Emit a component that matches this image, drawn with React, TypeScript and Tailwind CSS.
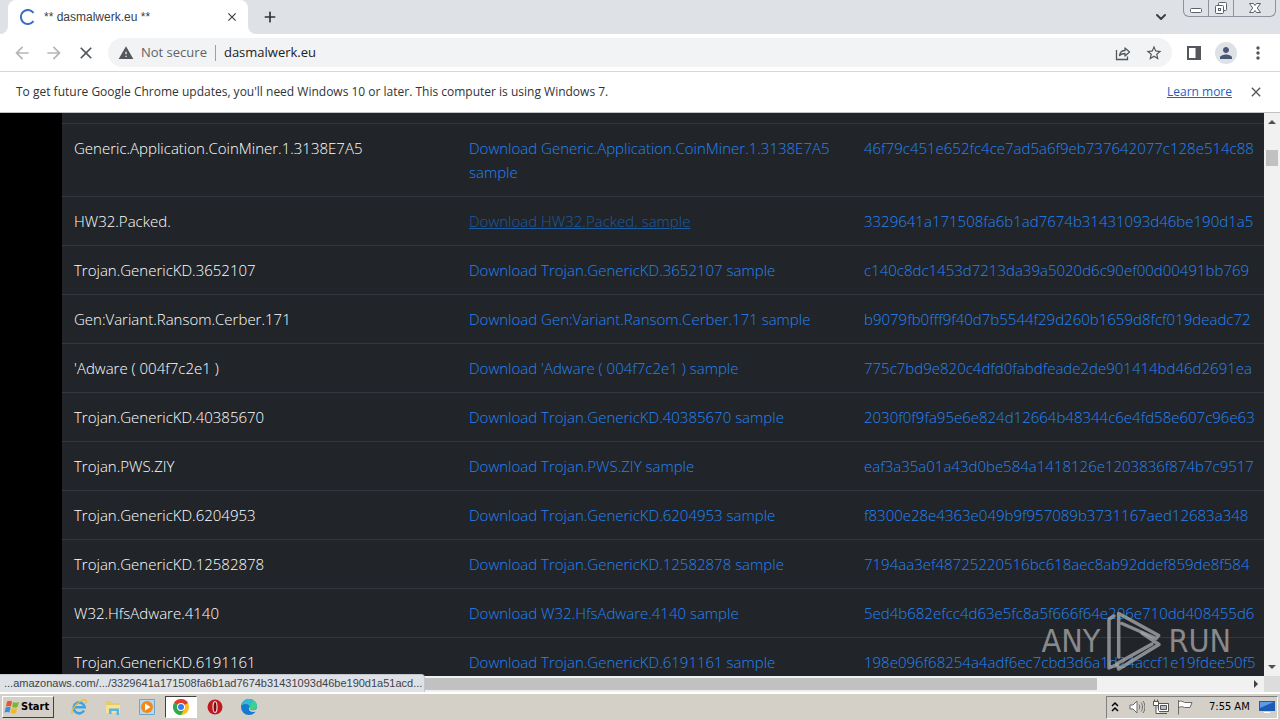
import type { ReactNode } from "react";
import { MdArrowBack, MdArrowForward, MdClose, MdMoreVert, MdPerson, MdStarBorder, MdWarning } from "react-icons/md";
import { ChevronDown, Plus } from "lucide-react";

type Sample = {
  name: string;
  hash: string;
  hovered?: boolean;
};

const samples: Sample[] = [
  { name: "Generic.Application.CoinMiner.1.3138E7A5", hash: "46f79c451e652fc4ce7ad5a6f9eb737642077c128e514c88" },
  { name: "HW32.Packed.", hash: "3329641a171508fa6b1ad7674b31431093d46be190d1a5", hovered: true },
  { name: "Trojan.GenericKD.3652107", hash: "c140c8dc1453d7213da39a5020d6c90ef00d00491bb769" },
  { name: "Gen:Variant.Ransom.Cerber.171", hash: "b9079fb0fff9f40d7b5544f29d260b1659d8fcf019deadc72" },
  { name: "'Adware ( 004f7c2e1 )", hash: "775c7bd9e820c4dfd0fabdfeade2de901414bd46d2691ea" },
  { name: "Trojan.GenericKD.40385670", hash: "2030f0f9fa95e6e824d12664b48344c6e4fd58e607c96e63" },
  { name: "Trojan.PWS.ZIY", hash: "eaf3a35a01a43d0be584a1418126e1203836f874b7c9517" },
  { name: "Trojan.GenericKD.6204953", hash: "f8300e28e4363e049b9f957089b3731167aed12683a348" },
  { name: "Trojan.GenericKD.12582878", hash: "7194aa3ef48725220516bc618aec8ab92ddef859de8f584" },
  { name: "W32.HfsAdware.4140", hash: "5ed4b682efcc4d63e5fc8a5f666f64e206e710dd408455d6" },
  { name: "Trojan.GenericKD.6191161", hash: "198e096f68254a4adf6ec7cbd3d6a1d24accf1e19fdee50f5" }
];

function TabStrip() {
  return (
    <div className="flex h-[34px] shrink-0 items-start bg-[#dee1e6] pl-2">
      <div className="relative flex h-full w-60 items-center rounded-t-lg bg-white pr-2 pl-3">
        <svg className="absolute bottom-0 -left-2 size-2" viewBox="0 0 8 8">
          <path d="M8 0v8H0a8 8 0 0 0 8-8z" fill="#fff" />
        </svg>
        <svg className="absolute -right-2 bottom-0 size-2" viewBox="0 0 8 8">
          <path d="M0 0v8h8a8 8 0 0 1-8-8z" fill="#fff" />
        </svg>
        <svg className="size-4" viewBox="0 0 16 16" fill="none">
          <path d="M13.5 3.8A7 7 0 1 0 13.5 12.2" stroke="#3b6fc4" strokeWidth="2" />
        </svg>
        <span className="ml-2 flex-1 font-['Liberation_Sans',sans-serif] text-[12px] text-[#3c4043]">
          ** dasmalwerk.eu **
        </span>
        <button type="button" aria-label="Close tab" className="flex size-4 items-center justify-center text-[#3c4043]">
          <MdClose className="size-3.5" />
        </button>
      </div>
      <button type="button" aria-label="New tab" className="ml-3 flex h-[34px] w-5 items-center justify-center text-[#30343a]">
        <Plus className="size-4" strokeWidth={2.5} />
      </button>
      <button type="button" aria-label="Search tabs" className="mr-3 ml-auto flex h-[34px] w-5 items-center justify-center text-[#3c4043]">
        <ChevronDown className="size-4" strokeWidth={3} />
      </button>
      <div className="mr-1 flex h-[17px] w-[93px] divide-x divide-[#8d929c] rounded-b-md border border-t-0 border-[#8d929c] text-[#5b606a]">
        <button type="button" aria-label="Minimize" className="flex w-[25px] items-center justify-center">
          <svg className="size-4" viewBox="0 0 16 16" fill="#fff" stroke="currentColor">
            <rect x="2.5" y="8.5" width="11" height="4" rx="1" />
          </svg>
        </button>
        <button type="button" aria-label="Restore" className="flex w-[25px] items-center justify-center">
          <svg className="size-4" viewBox="0 0 16 16" fill="#fff" stroke="currentColor">
            <rect x="5.5" y="2.5" width="8" height="8" rx="1" />
            <rect x="2.5" y="5.5" width="8" height="8" rx="1" />
            <rect x="5.5" y="8.5" width="2" height="2" />
          </svg>
        </button>
        <button type="button" aria-label="Close" className="flex flex-1 items-center justify-center">
          <svg className="size-4" viewBox="0 0 16 16" fill="#fff" stroke="currentColor">
            <path d="M2.5 3.5h4L8 5.5l1.5-2h4L10.3 8l3.2 4.5h-4L8 10.5l-1.5 2h-4L5.7 8z" />
          </svg>
        </button>
      </div>
    </div>
  );
}

function Toolbar() {
  return (
    <div className="flex h-[38px] shrink-0 items-center border-b border-[#d5d7db] bg-white pr-3 pl-3 text-[#54585d]">
      <div className="flex gap-3">
        <button type="button" aria-label="Back" className="text-[#b4b7ba]">
          <MdArrowBack className="size-5" />
        </button>
        <button type="button" aria-label="Forward" className="text-[#b4b7ba]">
          <MdArrowForward className="size-5" />
        </button>
        <button type="button" aria-label="Stop loading">
          <MdClose className="size-5" />
        </button>
      </div>
      <div className="ml-3 flex h-[29px] flex-1 items-center rounded-full bg-[#f1f3f4] pr-[9px] pl-2.5">
        <MdWarning className="size-4" />
        <span className="ml-[7px] text-[13px] text-[#5f6368]">Not secure</span>
        <span className="mx-2 h-4 w-px bg-[#9aa0a6]" />
        <input
          aria-label="Address"
          className="min-w-0 flex-1 bg-transparent text-[13px] text-[#202124] outline-none"
          defaultValue="dasmalwerk.eu"
        />
        <button type="button" aria-label="Share">
          <svg className="size-4" viewBox="0 0 16 16" fill="none" stroke="currentColor" strokeWidth="1.3">
            <path d="M1.5 5v9.5h11v-3" />
            <path d="M4.5 10.5c.5-3.500 2.500-5 5.500-5V3l4.500 4-4.500 4V8.500c-2.500 0-4 .5-5.500 2z" strokeLinejoin="round" />
          </svg>
        </button>
        <button type="button" aria-label="Bookmark" className="ml-3.5">
          <MdStarBorder className="size-[18px]" />
        </button>
      </div>
      <div className="ml-3 flex items-center gap-[11px]">
        <button type="button" aria-label="Side panel" className="flex size-5 items-center justify-center">
          <svg className="size-3.5" viewBox="0 0 14 14">
            <path d="M1 1h12v12H1z" fill="none" stroke="currentColor" strokeWidth="2" />
            <path d="M8.5 1H13v12H8.5z" fill="currentColor" />
          </svg>
        </button>
        <button type="button" aria-label="Profile" className="flex size-[22px] items-center justify-center rounded-full bg-[#dee1e6] text-[#4a5876]">
          <MdPerson className="size-[18px]" />
        </button>
        <button type="button" aria-label="Menu" className="flex size-5 items-center justify-center">
          <MdMoreVert className="size-5" />
        </button>
      </div>
    </div>
  );
}

function InfoBar() {
  return (
    <div className="flex h-[41px] shrink-0 items-center border-b border-[#bfc1c5] bg-white pr-4 pl-4 text-[12px] text-[#303337]">
      <p className="flex-1">
        To get future Google Chrome updates, you'll need Windows 10 or later. This computer is using Windows 7.
      </p>
      <a href="#learn" className="text-[#1a62c5] underline">
        Learn more
      </a>
      <button type="button" aria-label="Dismiss" className="ml-4 text-[#54585d]">
        <MdClose className="size-4" />
      </button>
    </div>
  );
}

function SampleTable() {
  return (
    <table className="w-[1580px] table-fixed border-collapse bg-[#212529] text-[15px] leading-6 font-light text-white">
      <colgroup>
        <col className="w-[395px]" />
        <col className="w-[395px]" />
        <col />
      </colgroup>
      <tbody>
        <tr className="h-[10px] border-b border-[#32383e]">
          <td colSpan={3} />
        </tr>
        {samples.map((sample) => (
          <tr key={sample.name} className="border-b border-[#32383e] align-top">
            <td className="p-3">{sample.name}</td>
            <td className="p-3">
              <a href="#sample" className={sample.hovered ? "text-[#1a5ca3] underline" : "text-[#2384f5]"}>
                Download {sample.name} sample
              </a>
            </td>
            <td className="p-3 whitespace-nowrap">
              <a href="#hash" className="text-[#2384f5]">
                {sample.hash}
              </a>
            </td>
          </tr>
        ))}
      </tbody>
    </table>
  );
}

function Watermark() {
  return (
    <div className="pointer-events-none absolute right-[33px] bottom-1 flex items-center gap-1.5 font-['DejaVu_Sans_Condensed',sans-serif] text-[32px] leading-none text-[#a4a6a8]/80">
      <span>ANY</span>
      <svg className="h-[62px] w-14" viewBox="0 0 56 62" fill="none" stroke="currentColor" strokeWidth="3.5" strokeLinejoin="round" strokeLinecap="round">
        <path d="M8 6L3 9v49l8-3.5" />
        <path d="M12.7 47V3.5l40 22-2.5 3L16 13.5" />
        <path d="M36 23l17 11.5L12.7 59l-1.5-5.5L46 34" />
      </svg>
      <span>RUN</span>
    </div>
  );
}

function VerticalScrollbar() {
  return (
    <div className="flex w-4 shrink-0 flex-col items-center bg-[#f1f1f1] pt-[7px] pb-[7px]">
      <svg className="h-1 w-2" viewBox="0 0 8 4">
        <path d="M0 4l4-4 4 4z" fill="#505050" />
      </svg>
      <div className="mt-[26px] h-4 w-3 bg-[#c1c1c1]" />
      <svg className="mt-auto h-1 w-2" viewBox="0 0 8 4">
        <path d="M0 0l4 4 4-4z" fill="#505050" />
      </svg>
    </div>
  );
}

function HorizontalScrollbar() {
  return (
    <div className="relative flex h-4 shrink-0 bg-[#f1f1f1]">
      <div className="flex flex-1 items-center pr-1.5 pl-4">
        <div className="h-3 w-[87%] bg-[#c1c1c1]" />
        <svg className="ml-auto h-2 w-1" viewBox="0 0 4 8">
          <path d="M0 0l4 4-4 4z" fill="#404040" />
        </svg>
      </div>
      <div className="w-4 bg-[#dcdcdc]" />
      <div className="absolute bottom-0 left-0 flex h-[18px] w-[425px] items-center rounded-tr-sm border-t border-r border-[#c3c7cd] bg-[#dee1e6] pl-1 font-['Liberation_Sans',sans-serif] text-[11px] whitespace-nowrap text-[#3f4348]">
        ...amazonaws.com/.../3329641a171508fa6b1ad7674b31431093d46be190d1a51acd...
      </div>
    </div>
  );
}

function TaskButton({ label, active = false, children }: { label: string; active?: boolean; children: ReactNode }) {
  return (
    <button
      type="button"
      aria-label={label}
      className={
        active
          ? "flex h-[22px] w-8 items-center justify-center border border-t-[#404040] border-r-white border-b-white border-l-[#404040] bg-white"
          : "flex h-[22px] w-8 items-center justify-center"
      }
    >
      <svg className="size-[18px]" viewBox="0 0 18 18" fill="none">
        {children}
      </svg>
    </button>
  );
}

function Taskbar() {
  return (
    <div className="flex h-7 shrink-0 items-center border-t-2 border-white bg-[#d4d0c8] pr-0.5 pl-0.5 font-['DejaVu_Sans_Condensed',sans-serif] text-[11px] text-black">
      <button
        type="button"
        className="flex h-[22px] w-[52px] items-center gap-px border border-t-white border-r-[#404040] border-b-[#404040] border-l-white pl-px font-bold"
      >
        <svg className="size-4 shrink-0" viewBox="0 0 16 16">
          <path d="M3 2.5c2-1 3.5-.8 5 0L7 7.5C5.5 6.7 4 6.7 2 7.5z" fill="#e8562a" />
          <path d="M9 3c2 1 3.5 1 6 0l-1.5 5c-2 1-3.5.8-5.3 0z" fill="#7cb535" />
          <path d="M1.7 8.5c2-1 3.5-.8 5 0l-1.3 5c-1.5-.8-3-.8-4.900 0z" fill="#3f8fd8" />
          <path d="M7.8 9c1.8.8 3.5 1 5.4 0L12 14c-2 1-3.5.8-5.4 0z" fill="#f5b921" />
        </svg>
        Start
      </button>
      <div className="ml-[9px] flex items-center gap-0.5">
        <TaskButton label="Internet Explorer">
          <path d="M14 12.5a5.5 5.5 0 1 1 .6-3.3H5" stroke="#3fa3e0" strokeWidth="2.6" />
          <path d="M2.5 16C-1 13 10 .5 15.5 2c1.5.5 1 2 .3 3.5" stroke="#e8bd3c" strokeWidth="1.3" />
        </TaskButton>
        <TaskButton label="Explorer">
          <path d="M2 3h5l1 2h7v9H2z" fill="#e9cb66" />
          <path d="M2 7h14v8H2z" fill="#f5e29a" />
          <path d="M5 16v-5.5h10V17h-2.5v-4h-5v3z" fill="#5db4dc" />
        </TaskButton>
        <TaskButton label="Media Player">
          <path d="M1.5 1.5h15v15h-15z" fill="#b9d8ee" stroke="#6fa5cc" />
          <circle cx="9" cy="9" r="6" fill="#f08a1c" />
          <path d="M7 5.5v7L12.5 9z" fill="#fff" />
        </TaskButton>
        <TaskButton label="Chrome" active>
          <circle cx="9" cy="9" r="8" fill="#fbc116" />
          <path d="M9 9L2.07 5a8 8 0 0 1 13.86 0z" fill="#e33b2e" />
          <path d="M9 9L2.07 5A8 8 0 0 0 9 17l3.5-6z" fill="#2da94f" />
          <circle cx="9" cy="9" r="4" fill="#fff" />
          <circle cx="9" cy="9" r="3" fill="#3b7de8" />
        </TaskButton>
        <TaskButton label="Opera">
          <circle cx="9" cy="9" r="7.5" fill="#c01a1f" />
          <ellipse cx="9" cy="9" rx="2" ry="5.5" fill="#7c0c10" stroke="#f3dada" strokeWidth="1.2" />
        </TaskButton>
        <TaskButton label="Edge">
          <circle cx="9" cy="9" r="8" fill="#1479cf" />
          <path d="M1.5 7C3 2.5 7 1 9 1c5 0 8 3.5 8 7 0 3-2.5 4-4.5 4-3 0-3-1-2.5-2C10.5 7 7 4.5 1.5 7z" fill="#3fcf8e" />
          <path d="M1.5 7C3 2.5 6 1 9 1c2 0 3 .5 4 1-2 3-2 4-3 6C9 5.5 5 5 1.5 7z" fill="#2fb8d8" />
          <path d="M10 8.5c.3 1.5-1.5 3.5 2.5 3.7 2 .1 3.5-.7 4.5-1.700v3l-4 .5C9 14 8 11 10 8.5z" fill="#d4d0c8" />
        </TaskButton>
      </div>
      <div className="ml-auto flex h-[23px] w-[172px] items-center border border-t-[#808080] border-r-white border-b-white border-l-[#808080] pr-0.5 pl-1">
        <svg className="h-3 w-2" viewBox="0 0 8 12" fill="none" stroke="#000" strokeWidth="1.5">
          <path d="M1 5l3-3 3 3M1 10l3-3 3 3" />
        </svg>
        <svg className="ml-2.5 size-4" viewBox="0 0 16 16" fill="#fff" stroke="#6b6b6b">
          <path d="M1 6h3l4-4v12l-4-4H1z" />
          <path d="M10 5.5c1 1.5 1 3.5 0 5M12 3.5c2 2.5 2 6.5 0 9M14 2c2.5 3.5 2.5 8.5 0 12" fill="none" />
        </svg>
        <svg className="ml-2 size-4" viewBox="0 0 16 16" fill="#fff" stroke="#555">
          <path d="M5.5 4.5h10v8h-10zM7 14.5h7" />
          <path d="M7.5 6.5h6v4h-6z" fill="#b8bcc2" />
          <path d="M.5 2.5h5v4h-5zM3 6.5v8h4M1.5.5v2M4.5.5v2" />
        </svg>
        <svg className="ml-2 size-4" viewBox="0 0 16 16" fill="#fff" stroke="#6b6b6b">
          <path d="M1.5 1v14.5M1.5 2.5c3-1 4 0 6 1h7.5l-2 5H7.5c-2-1-4-1-6 0z" />
        </svg>
        <span className="ml-4 flex-1 whitespace-nowrap">7:55 AM</span>
        <svg className="size-4" viewBox="0 0 16 16">
          <path d="M0 2h16v10H0z" fill="#1d5bb5" />
          <path d="M1 3h14L1 9z" fill="#5c9be6" />
          <path d="M5 13h6v1H5z" fill="#fff" />
        </svg>
      </div>
    </div>
  );
}

export default function App() {
  return (
    <div className="flex h-screen flex-col overflow-hidden bg-white font-['Open_Sans','Noto_Sans',sans-serif]">
      <TabStrip />
      <Toolbar />
      <InfoBar />
      <div className="flex min-h-0 flex-1 bg-black">
        <main className="relative min-w-0 flex-1 overflow-hidden pl-[62px]">
          <SampleTable />
          <Watermark />
        </main>
        <VerticalScrollbar />
      </div>
      <HorizontalScrollbar />
      <Taskbar />
    </div>
  );
}
